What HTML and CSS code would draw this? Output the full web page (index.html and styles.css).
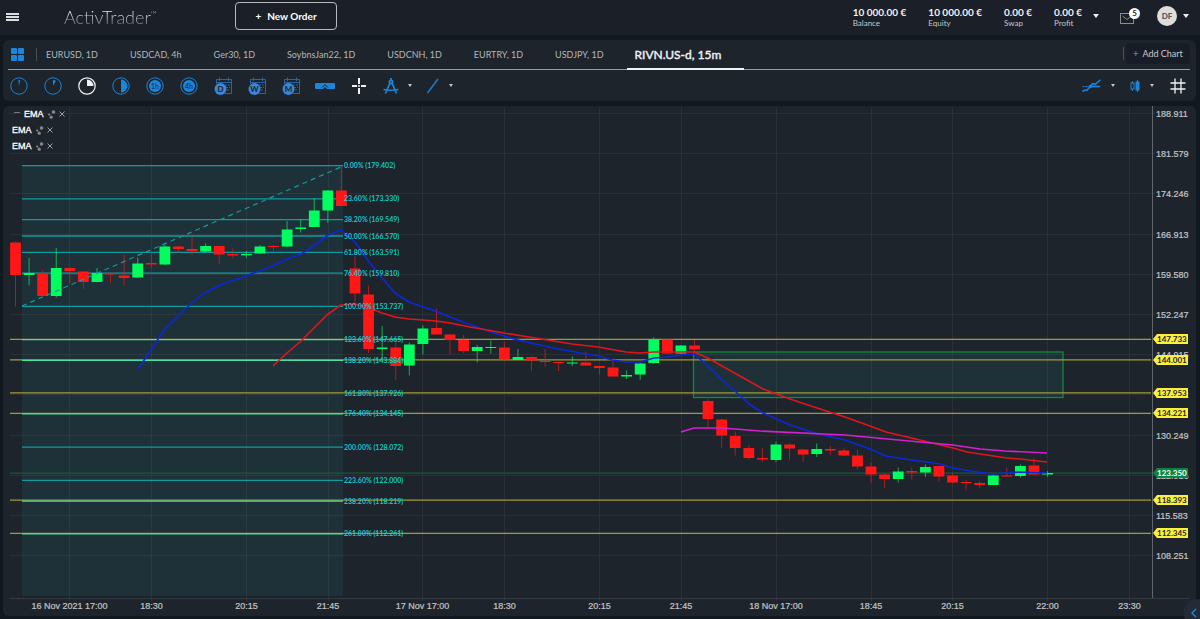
FILE: index.html
```html
<!DOCTYPE html>
<html lang="en">

<head>
    <meta charset="UTF-8">
    <meta name="viewport" content="width=device-width, initial-scale=1.0">
    <title>ActivTrader</title>
    <link rel="stylesheet" href="styles.css">
    <script src="chart.js" defer></script>
</head>

<body>
    <header class="topbar">
        <button class="menu-button" aria-label="Menu"><span></span><span></span><span></span></button>
        <a class="logo" href="#">ActivTrader<sup>™</sup></a>
        <button class="new-order"><span class="plus">+</span>New Order</button>
        <div class="account">
            <div class="stat"><strong>10 000.00 €</strong><span>Balance</span></div>
            <div class="stat"><strong>10 000.00 €</strong><span>Equity</span></div>
            <div class="stat"><strong>0.00 €</strong><span>Swap</span></div>
            <div class="stat"><strong>0.00 €</strong><span>Profit</span></div>
            <button class="caret-button" aria-label="Account details"><span class="caret"></span></button>
        </div>
        <button class="mail-button" aria-label="Messages">
            <svg width="14" height="11" viewBox="0 0 14 11" fill="none" stroke="#8a8d91">
                <rect x="0.5" y="0.5" width="13" height="10" />
                <path d="M2.5 3 L7 6.5 L11.5 3" />
            </svg>
            <span class="mail-badge">5</span>
        </button>
        <button class="user-button"><span class="avatar">DF</span><span class="caret"></span></button>
    </header>

    <section class="panel toolbar">
        <nav class="tabs">
            <button class="layout-button" aria-label="Layout">
                <svg width="13" height="13" viewBox="0 0 13 13" fill="#1b86d9">
                    <rect width="6" height="6" rx="1" />
                    <rect x="7" width="6" height="6" rx="1" />
                    <rect y="7" width="6" height="6" rx="1" />
                    <rect x="7" y="7" width="6" height="6" rx="1" />
                </svg>
            </button>
            <a class="tab" href="#">EURUSD, 1D</a>
            <a class="tab" href="#">USDCAD, 4h</a>
            <a class="tab" href="#">Ger30, 1D</a>
            <a class="tab" href="#">SoybnsJan22, 1D</a>
            <a class="tab" href="#">USDCNH, 1D</a>
            <a class="tab" href="#">EURTRY, 1D</a>
            <a class="tab" href="#">USDJPY, 1D</a>
            <a class="tab active" href="#">RIVN.US-d, 15m</a>
            <div class="add-chart-wrap">
                <button class="add-chart"><span class="plus">+</span>Add Chart</button>
            </div>
        </nav>

        <div class="tools">
            <button class="tool" aria-label="1 minute">
                <svg width="18" height="18" viewBox="0 0 18 18">
                    <circle cx="9" cy="9" r="8.2" fill="none" stroke="currentColor" />
                    <path d="M9 9 L8.3 3 H10 Z" fill="currentColor" />
                </svg>
            </button>
            <button class="tool" aria-label="5 minutes">
                <svg width="18" height="18" viewBox="0 0 18 18">
                    <circle cx="9" cy="9" r="8.2" fill="none" stroke="currentColor" />
                    <path d="M9 9 V3 A6 6 0 0 1 12 3.8 Z" fill="currentColor" />
                </svg>
            </button>
            <button class="tool selected" aria-label="15 minutes">
                <svg width="18" height="18" viewBox="0 0 18 18">
                    <circle cx="9" cy="9" r="8.2" fill="none" stroke="currentColor" stroke-width="1.2" />
                    <path d="M9 9 V2.5 A6.5 6.5 0 0 1 15.5 9 Z" fill="currentColor" />
                </svg>
            </button>
            <button class="tool" aria-label="30 minutes">
                <svg width="18" height="18" viewBox="0 0 18 18">
                    <circle cx="9" cy="9" r="8.2" fill="none" stroke="currentColor" />
                    <path d="M9 2.5 A6.5 6.5 0 0 1 9 15.5 Z" fill="currentColor" />
                </svg>
            </button>
            <button class="tool" aria-label="1 hour">
                <svg width="18" height="18" viewBox="0 0 18 18">
                    <circle cx="9" cy="9" r="8.2" fill="none" stroke="currentColor" />
                    <circle cx="9" cy="9" r="6" fill="currentColor" />
                    <text class="clock-text" x="9" y="11.5">1h</text>
                </svg>
            </button>
            <button class="tool" aria-label="4 hours">
                <svg width="18" height="18" viewBox="0 0 18 18">
                    <circle cx="9" cy="9" r="8.2" fill="none" stroke="currentColor" />
                    <circle cx="9" cy="9" r="6" fill="currentColor" />
                    <text class="clock-text" x="9" y="11.5">4h</text>
                </svg>
            </button>
            <button class="tool" aria-label="Daily">
                <svg width="18" height="18" viewBox="0 0 18 18">
                    <path class="cal-frame" d="M2.5 7 V2.5 H17.5 V16.5 H11 M2.5 5.5 H17.5 M5.5 0.5 V4 M14.5 0.5 V4" />
                    <path class="cal-days" d="M5 8 H16 M12 10.5 H16 M13 13 H16" />
                    <circle cx="6.5" cy="12" r="6" fill="#3a86d8" />
                    <text class="cal-text" x="6.5" y="15">D</text>
                </svg>
            </button>
            <button class="tool" aria-label="Weekly">
                <svg width="18" height="18" viewBox="0 0 18 18">
                    <path class="cal-frame" d="M2.5 7 V2.5 H17.5 V16.5 H11 M2.5 5.5 H17.5 M5.5 0.5 V4 M14.5 0.5 V4" />
                    <path class="cal-days" d="M5 8 H16 M12 10.5 H16 M13 13 H16" />
                    <circle cx="6.5" cy="12" r="6" fill="#3a86d8" />
                    <text class="cal-text" x="6.5" y="15">W</text>
                </svg>
            </button>
            <button class="tool" aria-label="Monthly">
                <svg width="18" height="18" viewBox="0 0 18 18">
                    <path class="cal-frame" d="M2.5 7 V2.5 H17.5 V16.5 H11 M2.5 5.5 H17.5 M5.5 0.5 V4 M14.5 0.5 V4" />
                    <path class="cal-days" d="M5 8 H16 M12 10.5 H16 M13 13 H16" />
                    <circle cx="6.5" cy="12" r="6" fill="#3a86d8" />
                    <text class="cal-text" x="6.5" y="15">M</text>
                </svg>
            </button>
            <button class="tool" aria-label="Quick trade">
                <svg width="20" height="6" viewBox="0 0 20 6">
                    <rect width="20" height="6" rx="1" fill="currentColor" />
                    <path d="M7 4.5 L10 1.5 L13 4.5" fill="none" stroke="#1e242b" />
                    <path d="M8 6 L10 4 L12 6 Z" fill="#1e242b" />
                </svg>
            </button>
            <button class="tool selected" aria-label="Crosshair">
                <svg width="14" height="16" viewBox="0 0 14 16">
                    <path d="M7 0 V6 M7 10 V16 M0 8 H5 M9 8 H14" stroke="currentColor" stroke-width="2" />
                    <circle cx="7" cy="8" r="1" fill="currentColor" />
                </svg>
            </button>
            <button class="tool with-caret" aria-label="Drawing tools">
                <svg width="16" height="16" viewBox="0 0 16 16" fill="none" stroke="currentColor" stroke-width="1.8">
                    <path d="M8 0 V3 M7 5 L2.5 15.5 M9 5 L13.5 15.5" />
                    <circle cx="8" cy="4" r="1.6" />
                    <path d="M0.5 11.5 Q8 13 15.5 11.5" stroke-width="1.6" />
                </svg>
                <span class="caret small"></span>
            </button>
            <button class="tool with-caret" aria-label="Line">
                <svg width="14" height="16" viewBox="0 0 14 16" fill="none" stroke="currentColor" stroke-width="1.3">
                    <path d="M1.5 15 L12 1" />
                </svg>
                <span class="caret small"></span>
            </button>

            <div class="tools-right">
                <button class="tool with-caret" aria-label="Indicators">
                    <svg width="19" height="14" viewBox="0 0 19 14" fill="none" stroke="currentColor">
                        <path d="M0.5 12.5 L3 11 L5 11.5 L8 7.5 L11 4.5 L13 5.5 L18.5 0.8" stroke-width="1.5" />
                        <path d="M0.5 7.5 H8" stroke-dasharray="2 1" />
                        <path d="M10 7.5 H18" stroke-width="1.6" />
                        <circle cx="8.5" cy="7.5" r="1.3" fill="currentColor" />
                    </svg>
                    <span class="caret small"></span>
                </button>
                <button class="tool with-caret" aria-label="Chart type">
                    <svg width="10" height="12" viewBox="0 0 10 12" fill="none" stroke="currentColor">
                        <path d="M2.5 1 V3 M2.5 9 V11 M7.5 0 V12" />
                        <rect x="1" y="3" width="3" height="6" />
                        <rect x="6" y="2" width="3" height="8" fill="currentColor" />
                    </svg>
                    <span class="caret small"></span>
                </button>
                <button class="tool selected grid-tool" aria-label="Grid">
                    <svg width="16" height="16" viewBox="0 0 16 16" stroke="currentColor" stroke-width="1.3">
                        <path d="M5 0.5 V15.5 M11 0.5 V15.5 M0.5 5 H15.5 M0.5 11 H15.5" />
                    </svg>
                </button>
            </div>
        </div>
    </section>

    <main class="panel chart-panel">
        <svg class="chart" id="chart" viewBox="3 106 1193 510" role="img" aria-label="RIVN.US-d price chart"></svg>
        <ul class="legend">
            <li class="legend-row">
                <button class="legend-button minus" aria-label="Collapse">
                    <svg width="6" height="6" viewBox="0 0 6 6"><path d="M0 2.5 H6" stroke="#777b80" /></svg>
                </button>
                <span>EMA</span>
                <button class="legend-button" aria-label="Settings"><svg width="9" height="9" viewBox="0 0 9 9" fill="#85888c"><circle cx="6.5" cy="2" r="1.8" /><circle cx="2.2" cy="4.6" r="1.1" /><circle cx="4.2" cy="7.2" r="1.6" /></svg></button>
                <button class="legend-button" aria-label="Remove"><svg width="6" height="6" viewBox="0 0 6 6" stroke="#9a9da1"><path d="M0.5 0.5 L5.5 5.5 M5.5 0.5 L0.5 5.5" /></svg></button>
            </li>
            <li class="legend-row">
                <span>EMA</span>
                <button class="legend-button" aria-label="Settings"><svg width="9" height="9" viewBox="0 0 9 9" fill="#85888c"><circle cx="6.5" cy="2" r="1.8" /><circle cx="2.2" cy="4.6" r="1.1" /><circle cx="4.2" cy="7.2" r="1.6" /></svg></button>
                <button class="legend-button" aria-label="Remove"><svg width="6" height="6" viewBox="0 0 6 6" stroke="#9a9da1"><path d="M0.5 0.5 L5.5 5.5 M5.5 0.5 L0.5 5.5" /></svg></button>
            </li>
            <li class="legend-row">
                <span>EMA</span>
                <button class="legend-button" aria-label="Settings"><svg width="9" height="9" viewBox="0 0 9 9" fill="#85888c"><circle cx="6.5" cy="2" r="1.8" /><circle cx="2.2" cy="4.6" r="1.1" /><circle cx="4.2" cy="7.2" r="1.6" /></svg></button>
                <button class="legend-button" aria-label="Remove"><svg width="6" height="6" viewBox="0 0 6 6" stroke="#9a9da1"><path d="M0.5 0.5 L5.5 5.5 M5.5 0.5 L0.5 5.5" /></svg></button>
            </li>
        </ul>
    </main>

    <button class="side-toggle" aria-label="Open side panel">
        <svg width="6" height="10" viewBox="0 0 6 10" fill="none" stroke="#1b86d9" stroke-width="1.5">
            <path d="M5 1 L1 5 L5 9" />
        </svg>
    </button>
</body>

</html>
```
FILE: styles.css
```css
* {
    box-sizing: border-box;
}

body {
    margin: 0;
    min-height: 100vh;
    background-color: #12181f;
    font-family: Lato, "Liberation Sans", sans-serif;
    color: #fff;
    overflow-x: hidden;
}

button {
    margin: 0;
    padding: 0;
    border: 0;
    background: none;
    color: inherit;
    font: inherit;
    cursor: pointer;
}

a {
    color: inherit;
    text-decoration: none;
}

svg {
    display: block;
}

/* Top bar */
.topbar {
    display: flex;
    align-items: center;
    height: 35px;
    padding: 0 11px 3px 6px;
    background-color: #1b1f27;
}

.menu-button {
    display: flex;
    flex-direction: column;
    gap: 1px;
    width: 13px;
    margin-top: 2px;
}

.menu-button span {
    height: 2px;
    background-color: #dcdddf;
}

.logo {
    width: 171px;
    margin-left: 45px;
    padding-top: 2px;
    font-size: 18px;
    line-height: 24px;
    font-weight: 300;
    background: linear-gradient(#f2f3f5 30%, #6b7a8c 85%);
    -webkit-background-clip: text;
    background-clip: text;
    color: transparent;
}

.logo sup {
    font-size: 8px;
    line-height: 0;
    vertical-align: 7px;
}

.new-order {
    width: 102px;
    height: 28px;
    border: 1px solid #b9bbbe;
    border-radius: 4px;
    font-size: 10px;
    font-weight: 700;
}

.new-order .plus {
    margin-right: 6px;
}

.account {
    display: flex;
    align-items: center;
    gap: 22px;
    margin-left: auto;
}

.stat {
    display: flex;
    flex-direction: column;
    padding-top: 2px;
    font-size: 8px;
    line-height: 10px;
    color: #c4c6c9;
}

.stat strong {
    font-size: 10px;
    line-height: 12px;
    color: #f2f2f3;
}

.caret-button {
    margin-left: -11px;
}

.caret {
    display: block;
    border: 3px solid transparent;
    border-top: 4px solid #f2f2f3;
    border-bottom: 0;
}

.caret.small {
    border-width: 3px 2px 0;
    border-top-color: #c4c6c9;
}

.mail-button {
    position: relative;
    margin: 4px 23px 0 21px;
}

.mail-badge {
    position: absolute;
    top: -5px;
    right: -6px;
    width: 11px;
    height: 11px;
    border-radius: 50%;
    background-color: #fff;
    color: #1b1f27;
    font-size: 8px;
    line-height: 11px;
    font-weight: 700;
}

.user-button {
    display: flex;
    align-items: center;
    gap: 6px;
}

.avatar {
    width: 20px;
    height: 20px;
    border-radius: 50%;
    background-color: #dfdcdc;
    color: #55585d;
    font-size: 8px;
    line-height: 20px;
    font-weight: 900;
}

/* Panels */
.panel {
    margin: 5px 4px 0 3px;
    border-radius: 6px;
    background-color: #1e242b;
}

.toolbar {
    padding: 0 6px 0 5px;
}

.tabs {
    display: flex;
    height: 30px;
    border-bottom: 1px solid #9a9da0;
    font-size: 9px;
}

.layout-button {
    position: relative;
    display: flex;
    align-items: center;
    padding: 0 12px 1px 3px;
}

.layout-button::after,
.add-chart-wrap::before {
    content: "";
    width: 1px;
    height: 13px;
    background-color: #4a5057;
}

.layout-button::after {
    margin-left: 12px;
    margin-right: -18px;
}

.tab {
    padding: 0 16px;
    line-height: 30px;
    white-space: nowrap;
    color: #b4b6b9;
}

.layout-button + .tab {
    padding-left: 15px;
}

.tab.active {
    height: 30px;
    margin-left: 7px;
    padding: 0 23px 0 8px;
    border-bottom: 2px solid #f2f2f3;
    font-size: 12px;
    -webkit-text-stroke: 0.4px #f2f2f3;
    color: #f2f2f3;
}

.add-chart-wrap {
    display: flex;
    align-items: center;
    gap: 2px;
    height: 27px;
    margin-left: auto;
}

.add-chart {
    width: 64px;
    height: 21px;
    border-radius: 4px;
    background-color: #181c27;
    white-space: nowrap;
    color: #c9cbce;
}

.add-chart .plus {
    margin-right: 4px;
    color: #1b86d9;
    font-weight: 900;
}

.tools {
    display: flex;
    height: 31px;
    margin-left: -6px;
}

.tool {
    display: flex;
    align-items: center;
    justify-content: center;
    width: 34px;
    color: #1b86d9;
}

.tool.selected {
    color: #f2f2f3;
}

.tool.with-caret {
    width: 42px;
    gap: 9px;
}

.clock-text,
.cal-text {
    font-size: 7px;
    text-anchor: middle;
    fill: #1e242b;
}

.cal-text {
    font-size: 8px;
    font-weight: 700;
}

.cal-frame,
.cal-days {
    fill: none;
    stroke: #2b64a3;
}

.cal-days {
    stroke-dasharray: 2 1;
}

.tools-right {
    display: flex;
    margin-left: auto;
}

.tools-right .with-caret {
    width: 44px;
    gap: 10px;
}

.grid-tool {
    width: 24px;
    margin-left: 2px;
}

/* Chart */
.chart-panel {
    position: relative;
}

.chart {
    width: 100%;
    height: auto;
}

.legend {
    position: absolute;
    top: 0;
    left: 9px;
    margin: 0;
    padding: 0;
    list-style: none;
    font-family: "Liberation Sans", Arial, sans-serif;
    font-size: 9px;
}

.legend-row {
    display: flex;
    align-items: center;
    gap: 3px;
    height: 16px;
    -webkit-text-stroke: 0.3px #fff;
}

.legend-button.minus {
    margin: 0 1px 3px 2px;
}

.grid-line {
    stroke: #2c3035;
}

.axis-line {
    stroke: #62666b;
}

.time-line {
    stroke: #343a41;
}

.axis-text {
    font-family: "Liberation Sans", Arial, sans-serif;
    font-size: 9px;
    fill: #c3c5c8;
    stroke: #c3c5c8;
    stroke-width: 0.2;
}

.time-text {
    text-anchor: middle;
}

.fib-area,
.zone {
    fill: #228c9a;
    fill-opacity: 0.12;
}

.zone {
    stroke: #138a3d;
    stroke-width: 1.3;
}

.fib-line {
    stroke: #0f9ba0;
    stroke-width: 1.3;
}

.fib-line.overlap {
    stroke: #4fdfa0;
}

.trend-line {
    stroke: #179a9c;
    stroke-width: 1.2;
    stroke-dasharray: 5 4;
}

.fib-text,
.tag-text {
    font-family: Lato, "Open Sans", sans-serif;
    font-size: 7px;
    font-weight: 700;
    fill: #0fc7c9;
}

.tag-text {
    font-size: 8px;
    fill: #1e242b;
}

.level-line {
    stroke: #a09a39;
    stroke-width: 1.3;
}

.price-line {
    stroke: #105c38;
    stroke-width: 1.3;
}

.tag {
    fill: #fbf13c;
}

.tag.current {
    fill: #0a8540;
}

.tag-text.current {
    fill: #fff;
}

.up {
    fill: #00ff5e;
    stroke: #00ff5e;
}

.down {
    fill: #ff1717;
    stroke: #ff1717;
}

.body {
    stroke: none;
}

.wick {
    stroke-opacity: 0.65;
}

.ema {
    fill: none;
    stroke-width: 1.6;
    stroke-linejoin: round;
}

.ema.fast {
    stroke: #0a28dc;
}

.ema.slow {
    stroke: #e0161c;
}

.ema.long {
    stroke: #d421cf;
}

/* Drawer handle in the window corner */
.side-toggle {
    position: fixed;
    right: -10px;
    bottom: -8px;
    width: 26px;
    height: 28px;
    padding-left: 7px;
    border-radius: 13px;
    background-color: #232b37;
}
```
FILE: chart.js
```js
'use strict';

const SVG_NS = 'http://www.w3.org/2000/svg';
const chart = document.getElementById('chart');

const PLOT = { left: 10, right: 1152, top: 107, bottom: 598 };
const FIRST_CANDLE_X = 15.5;
const CANDLE_STEP = 13.58;
const BODY_WIDTH = 10.8;

const priceTicks = [188.911, 181.579, 174.246, 166.913, 159.58, 152.247, 144.915, 137.582, 130.249, 122.916, 115.583, 108.251];

const timeTicks = [
    [69.5, '16 Nov 2021 17:00'], [151.5, '18:30'], [246.5, '20:15'], [328, '21:45'],
    [422.5, '17 Nov 17:00'], [504.5, '18:30'], [599.5, '20:15'], [681, '21:45'],
    [776, '18 Nov 17:00'], [871, '18:45'], [952.5, '20:15'], [1047.5, '22:00'], [1129.5, '23:30']
];

const fibLevels = [
    ['0.00%', 179.402], ['23.60%', 173.33], ['38.20%', 169.549], ['50.00%', 166.57], ['61.80%', 163.591],
    ['76.40%', 159.81], ['100.00%', 153.737], ['123.60%', 147.665], ['138.20%', 143.884], ['161.80%', 137.926],
    ['176.40%', 134.145], ['200.00%', 128.072], ['223.60%', 122], ['238.20%', 118.219], ['261.80%', 112.261]
];

const levels = [147.733, 144.001, 137.953, 134.221, 118.393, 112.345];
const currentPrice = 123.35;

// direction, body top, body bottom, wick top, wick bottom
const candles = [
    ['down', 242.5, 275, 241.5, 306.5], ['up', 273, 275, 258, 285.5], ['down', 273, 296, 270, 296],
    ['up', 268, 296, 248, 297.5], ['down', 268, 271, 267, 283], ['down', 271.5, 282, 271, 289],
    ['up', 273, 282, 268, 282], ['down', 273, 274.5, 273, 283], ['down', 275.5, 278, 254.5, 285],
    ['up', 263.5, 277.5, 257.5, 278], ['down', 263, 264.5, 253.5, 267.5], ['up', 246.5, 264.5, 244.5, 265],
    ['down', 246.5, 249, 246, 252.5], ['down', 249, 251, 236.5, 255.5], ['up', 246, 251.5, 243.5, 252],
    ['down', 246, 254.5, 246, 263.5], ['down', 254, 255.5, 248.5, 258.5], ['up', 254, 255.3, 251, 258],
    ['up', 246.5, 253.5, 245, 254], ['down', 246, 247, 245, 251.5], ['up', 229.5, 246.5, 221, 247],
    ['up', 227.5, 229, 219, 232.5], ['up', 210.5, 227, 198, 227], ['up', 190.5, 210.5, 190, 223],
    ['down', 190.5, 206, 166.5, 206], ['down', 268.5, 293.5, 256.5, 304.5], ['down', 294.5, 349, 285.5, 353],
    ['up', 347.5, 349, 326, 359.5], ['down', 347.5, 366, 340, 380], ['up', 344.5, 365.5, 342.5, 375.5],
    ['up', 328.5, 344, 325.5, 354.5], ['down', 328, 334.5, 308.5, 334.5], ['down', 334.5, 340, 334, 354],
    ['down', 340, 351, 335, 353], ['up', 347, 351, 345, 362.5], ['up', 347, 348, 340.5, 353.5],
    ['down', 347.5, 359.5, 342, 360], ['up', 357, 360, 349, 360], ['down', 357, 360.5, 356, 371],
    ['down', 361, 362, 349, 366.5], ['down', 362, 363, 362, 371], ['up', 362.5, 363.5, 356.5, 366],
    ['down', 362.5, 365.5, 351.5, 366], ['down', 366, 368, 366, 375], ['down', 367.5, 376.5, 361, 377],
    ['up', 375, 376.5, 370.5, 379], ['up', 363.5, 374.5, 363, 380], ['up', 339.5, 363, 337.5, 364],
    ['down', 339.5, 353.5, 339, 354], ['up', 345.5, 353.5, 345, 354], ['down', 345.5, 349.5, 340, 351.5],
    ['down', 401, 419, 399, 428], ['down', 419.5, 435.5, 419, 448], ['down', 436, 448, 431.5, 455.5],
    ['down', 448, 458, 445, 459.5], ['down', 458, 459.5, 448, 462], ['up', 444.5, 460, 441.5, 462],
    ['down', 444.5, 448.5, 443.5, 459.5], ['down', 449.5, 454.5, 449, 462], ['up', 449, 454, 443.5, 457],
    ['down', 449, 450.5, 446, 455], ['down', 450.5, 455.5, 448.5, 456], ['down', 455.5, 466.5, 449.5, 469.5],
    ['down', 466.5, 474.5, 462.5, 482.5], ['down', 474.5, 479, 474, 488], ['up', 471.5, 479, 467.5, 482.5],
    ['down', 471, 472.5, 467.5, 479.5], ['up', 467, 472.5, 464.5, 477], ['down', 466, 476.5, 466, 481.5],
    ['down', 475.5, 482.5, 473, 483.5], ['down', 482, 483, 480, 490.5], ['down', 483, 485, 481, 488],
    ['up', 475.5, 485, 474.5, 485], ['down', 475.5, 476.5, 467.5, 476.5], ['up', 466, 476, 464.5, 477.5],
    ['down', 465.5, 474.5, 458.5, 475], ['up', 473, 474.5, 471, 477]
];

const emaFast = '138,369 151,350 164,330 180,314 193,302 203,294 220,285 240,278 273,266 287,259 301,254 315,245 328,235 341,230 355,242 369,262 382,278 395,293 409,302 438,312 450,317 463,322 477,327 491,332 504,336 518,340 531,343 558,349 598,356 612,360 626,362 640,362 654,358 667,357 681,355 694,354 708,366 722,380 736,392 749,404 763,413 790,425 818,434 845,440 870,449 886,456 911,460 927,462 940,464 953,468 977,472 993,474 1005,473 1020,472 1047,473';
const emaSlow = '273,366 287,353 301,341 315,327 328,314 341,305 355,304 369,308 382,313 395,317 409,319 423,320 436,321 450,323 470,327 504,333 541,339 572,344 598,347 626,352 640,353 654,352 668,352 694,352 708,358 722,366 747,380 763,389 777,394 790,399 817,408 845,417 870,426 886,432 920,440 953,448 967,452 980,454 1007,458 1020,459 1047,462';
const emaLong = '681,432 694,428 722,428 735,429 760,431 845,435 920,442 953,445 980,449 1005,451 1047,453';

function draw(tag, className, attrs, text) {
    const node = document.createElementNS(SVG_NS, tag);
    node.setAttribute('class', className);
    for (const name in attrs) {
        node.setAttribute(name, attrs[name]);
    }
    if (text) {
        node.textContent = text;
    }
    chart.appendChild(node);
}

function line(className, x1, y1, x2, y2) {
    draw('line', className, { x1, y1, x2, y2 });
}

function priceToY(price) {
    return 113.5 + (188.911 - price) * 5.484;
}

function drawTag(price, modifier) {
    const y = Math.round(priceToY(price));
    draw('path', 'tag ' + modifier, { d: `M1153 ${y} L1157 ${y - 5} H1188 V${y + 5} H1157 Z` });
    draw('text', 'tag-text ' + modifier, { x: 1157, y: y + 3 }, price.toFixed(3));
}

// Grid and axes
for (const price of priceTicks) {
    const y = Math.floor(priceToY(price)) + 0.5;
    line('grid-line', PLOT.left, y, PLOT.right + 3, y);
    draw('text', 'axis-text', { x: 1156, y: y + 3.5 }, price.toFixed(3));
}
for (const [x, label] of timeTicks) {
    const gridX = Math.floor(x) + 0.5;
    line('grid-line', gridX, PLOT.top, gridX, PLOT.bottom + 3);
    draw('text', 'axis-text time-text', { x, y: 609 }, label);
}
line('axis-line', 1152.5, 106, 1152.5, 598);
line('time-line', 9, 598.5, 1190, 598.5);

// Areas and levels
draw('rect', 'fib-area', { x: 22, y: 165, width: 321, height: 431 });
draw('rect', 'zone', { x: 693.5, y: 352, width: 369.5, height: 45.5 });
line('price-line', PLOT.left, priceToY(currentPrice), PLOT.right, priceToY(currentPrice));
for (const price of levels) {
    line('level-line', PLOT.left, priceToY(price), PLOT.right - 1, priceToY(price));
}
for (const [, price] of fibLevels) {
    const distance = Math.min(...levels.map(level => Math.abs(level - price)));
    // a level this close covers the fib line completely
    if (distance < 0.05) {
        continue;
    }
    line(distance < 0.18 ? 'fib-line overlap' : 'fib-line', 22, priceToY(price), 343, priceToY(price));
}

// Candles
candles.forEach(([direction, top, bottom, high, low], i) => {
    const x = FIRST_CANDLE_X + i * CANDLE_STEP;
    line('wick ' + direction, x, high, x, low);
    draw('rect', 'body ' + direction, { x: x - BODY_WIDTH / 2, y: top, width: BODY_WIDTH, height: bottom - top });
});

line('trend-line', 22, 306, 341, 167);
draw('polyline', 'ema fast', { points: emaFast });
draw('polyline', 'ema slow', { points: emaSlow });
draw('polyline', 'ema long', { points: emaLong });

for (const [percent, price] of fibLevels) {
    draw('text', 'fib-text', { x: 344, y: priceToY(price) + 2.5 }, `${percent} (${price.toFixed(3)})`);
}

levels.forEach(price => drawTag(price, ''));
drawTag(currentPrice, 'current');
```
